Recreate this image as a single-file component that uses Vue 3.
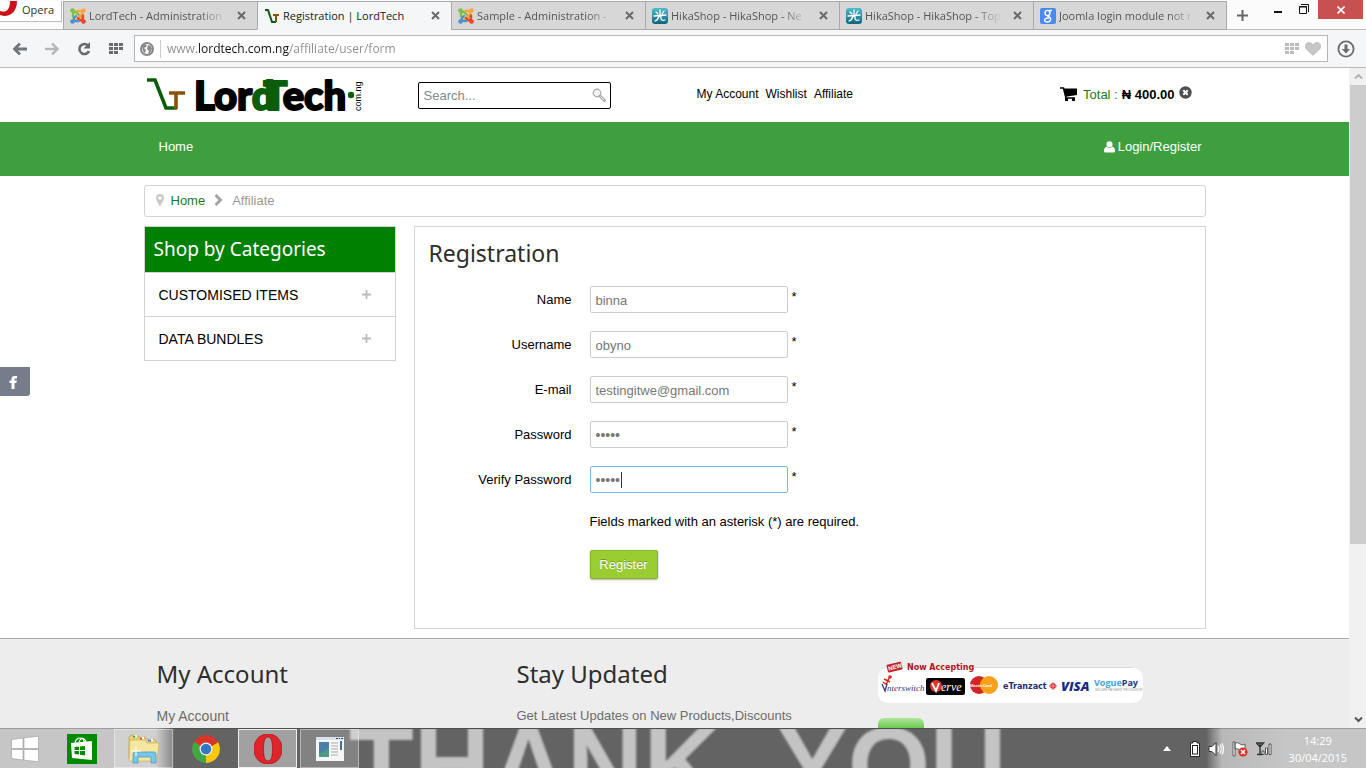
<template>
  <div class="screen">
    <header class="browser">
      <div class="tab-strip">
        <button class="opera-menu" type="button">
          <svg class="opera-mark" viewBox="0 0 18 16" width="18" height="16">
            <path d="M10 0 H17 C17 9 12 15 4 15 L0 14 V10 C6 12 10 9 10 0 Z" fill="#cc1118" />
          </svg>
          <span>Opera</span>
        </button>
        <div v-for="tab in tabs" :key="tab.id" class="tab" :class="{ active: tab.active }">
          <svg v-if="tab.icon === 'joomla'" viewBox="0 0 16 16" width="16" height="16">
            <g fill="none" stroke-width="2.4" stroke-linecap="round">
              <path d="M3 8.500 V6 Q3 3 6 4 L11.500 9.500" stroke="#7ac143" />
              <path d="M7.500 3 H10 Q13 3 12 6 L6.500 11.500" stroke="#f9a541" />
              <path d="M13 7.500 V10 Q13 13 10 12 L8 10" stroke="#f44321" />
              <path d="M8.500 13 H6 Q3 13 4 10 L6 8" stroke="#5091cd" />
            </g>
            <circle cx="2.500" cy="2.500" r="2.300" fill="#7ac143" />
            <circle cx="13.500" cy="2.500" r="2.300" fill="#f9a541" />
            <circle cx="13.500" cy="13.500" r="2.300" fill="#f44321" />
            <circle cx="2.500" cy="13.500" r="2.300" fill="#5091cd" />
          </svg>
          <svg v-else-if="tab.icon === 'lord'" viewBox="0 0 16 16" width="16" height="16">
            <path d="M1 2 H4 L8 14 H12" fill="none" stroke="#0b5d0b" stroke-width="2" />
            <path d="M9 7 H15 M12 7 V14" fill="none" stroke="#8a5208" stroke-width="2" />
          </svg>
          <svg v-else-if="tab.icon === 'hika'" viewBox="0 0 16 16" width="16" height="16">
            <defs>
              <linearGradient id="hika" x1="0" y1="0" x2="0" y2="1">
                <stop offset="0" stop-color="#4fb9cc" />
                <stop offset="1" stop-color="#11657c" />
              </linearGradient>
            </defs>
            <rect width="16" height="16" rx="3" fill="url(#hika)" />
            <path
              d="M8 2 V8 M4 4 L6 6 M12 3 L10 6 M2 8 L14 7 M7 8 Q6 12 3 13 M9 8 V11 Q10 13 13 12"
              fill="none"
              stroke="#fff"
              stroke-width="1.3"
              stroke-linecap="round"
            />
          </svg>
          <svg v-else viewBox="0 0 16 16" width="16" height="16">
            <rect width="16" height="16" rx="2" fill="#4a8af4" />
            <g fill="none" stroke="#fff" stroke-width="1.4">
              <ellipse cx="7.5" cy="5" rx="2.4" ry="2.6" />
              <path d="M9 2.5 H12 M7 8 Q11 9 10.6 11.5 Q10 14 7.5 14 Q4.6 14 4.6 12 Q5 10 9 10" />
            </g>
          </svg>
          <span class="tab-title">{{ tab.title }}</span>
          <button class="tab-close" type="button" aria-label="Close tab">
            <svg viewBox="0 0 9 9" width="9" height="9">
              <path d="M1 1 L8 8 M8 1 L1 8" stroke="#6a6a6a" stroke-width="2" />
            </svg>
          </button>
        </div>
        <button class="new-tab" type="button" aria-label="New tab">
          <svg viewBox="0 0 11 11" width="11" height="11">
            <path d="M5.5 0 V11 M0 5.5 H11" stroke="#666" stroke-width="2" />
          </svg>
        </button>
        <div class="window-controls">
          <button type="button" aria-label="Minimize">
            <svg viewBox="0 0 10 18" width="10" height="18">
              <path d="M1 12 H9" stroke="#111" stroke-width="2" />
            </svg>
          </button>
          <button type="button" aria-label="Restore">
            <svg viewBox="0 0 10 18" width="10" height="18">
              <path d="M2 4.5 H9.5 V12" fill="none" stroke="#111" />
              <path d="M.5 6.5 H7.5 V13.5 H.5 Z M0 7 H8" fill="none" stroke="#111" />
            </svg>
          </button>
          <button class="window-close" type="button" aria-label="Close">
            <svg viewBox="0 0 8 8" width="8" height="8">
              <path d="M.5 .5 L7.5 7.5 M7.5 .5 L.5 7.5" stroke="#fff" stroke-width="1.6" />
            </svg>
          </button>
        </div>
      </div>

      <div class="toolbar">
        <button type="button" aria-label="Back">
          <svg viewBox="0 0 14 12" width="14" height="12">
            <path d="M7 0.5 L1.5 6 L7 11.5 M2 6 H14" fill="none" stroke="#70767c" stroke-width="2.8" />
          </svg>
        </button>
        <button type="button" aria-label="Forward">
          <svg viewBox="0 0 14 12" width="14" height="12">
            <path d="M7 0.5 L12.5 6 L7 11.5 M12 6 H0" fill="none" stroke="#b6b6b6" stroke-width="2.4" />
          </svg>
        </button>
        <button type="button" aria-label="Reload">
          <svg viewBox="0 0 14 14" width="14" height="14">
            <path d="M11 3.5 A5 5 0 1 0 12 9" fill="none" stroke="#6a6a6a" stroke-width="2.6" />
            <path d="M13 0 V6.5 H6.5 Z" fill="#6a6a6a" />
          </svg>
        </button>
        <button type="button" aria-label="Speed dial">
          <svg viewBox="0 0 14 11" width="14" height="11">
            <path
              d="M0 1.5 H4 M5 1.5 H9 M10 1.5 H14 M0 5.5 H4 M5 5.5 H9 M10 5.5 H14 M0 9.5 H4 M5 9.5 H9"
              stroke="#6a6a6a"
              stroke-width="3"
            />
          </svg>
        </button>
        <div class="address">
          <svg viewBox="0 0 14 14" width="14" height="14">
            <circle cx="7" cy="7" r="6" fill="#fff" stroke="#888" stroke-width="2" />
            <path d="M2 4 L5 2 L7 3 L6 5 L4 6 L6 8 L5 11 L3 9 Z M8 3 L11 4 L12 7 L10 11 L8 12 L9 9 L7 7 Z" fill="#888" />
          </svg>
          <span class="address-line"></span>
          <input v-model="url" class="url" type="text" aria-label="Address" />
          <svg viewBox="0 0 14 11" width="14" height="11">
            <path
              d="M0 1.5 H4 M5 1.5 H9 M10 1.5 H14 M0 5.5 H4 M5 5.5 H9 M10 5.5 H14 M0 9.5 H4 M5 9.5 H9"
              stroke="#bbb"
              stroke-width="3"
            />
          </svg>
          <svg viewBox="0 0 16 14" width="16" height="14">
            <path
              d="M8 13.5 L1.2 7 C-.8 4.500 .4 .5 4 .5 C6 .5 7.400 1.600 8 3 C8.600 1.600 10 .5 12 .5 C15.600 .5 16.800 4.500 14.800 7 Z"
              fill="#c6c6c6"
              stroke="#b4b4b4"
              stroke-width=".6"
            />
          </svg>
        </div>
        <button type="button" aria-label="Downloads">
          <svg viewBox="0 0 18 18" width="18" height="18">
            <circle cx="9" cy="9" r="7.600" fill="none" stroke="#6b6b6b" stroke-width="1.8" />
            <path d="M7.500 4.500 H10.500 V9 H13 L9 13.500 L5 9 H7.500 Z" fill="#6b6b6b" />
          </svg>
        </button>
      </div>
    </header>

    <div class="viewport">
      <div class="page">
        <div class="site-header container">
          <a class="logo" href="#" aria-label="LordTech">
            <svg viewBox="0 0 218 40" width="218" height="40">
              <path d="M0 5 H8 L19 33 H30" fill="none" stroke="#0b5d0b" stroke-width="3.600" />
              <path d="M22 18 H38 M29 18 V34" fill="none" stroke="#8a5208" stroke-width="3.600" />
              <text x="47" y="35" class="logo-word">Lor<tspan class="green">d</tspan><tspan class="green" dx="-11">T</tspan>ech</text>
              <circle cx="204" cy="20" r="3.200" fill="#0b5d0b" />
              <text class="logo-domain" transform="translate(214 36) rotate(-90)">com.ng</text>
            </svg>
          </a>
          <form class="search" @submit.prevent>
            <input v-model="query" type="text" placeholder="Search..." aria-label="Search" />
            <button type="submit" aria-label="Go">
              <svg viewBox="0 0 14 14" width="14" height="14">
                <circle cx="5" cy="5" r="3.800" fill="#f4f4f4" stroke="#aaa" stroke-width="1.2" />
                <path d="M8 8 L12.500 12.500" stroke="#aaa" stroke-width="3" stroke-linecap="round" />
                <path d="M8.500 8.500 L12.300 12.300" stroke="#f4f4f4" stroke-width="1" />
              </svg>
            </button>
          </form>
          <nav class="top-links">
            <a v-for="link in topLinks" :key="link" href="#">{{ link }}</a>
          </nav>
          <div class="cart">
            <svg viewBox="0 0 17 15" width="17" height="15">
              <path d="M0 1 H3.500 L6 11 H15" fill="none" stroke="#000" stroke-width="1.600" />
              <path d="M3.500 1.500 H17 V8 L5.500 9.800 Z" fill="#000" />
              <rect x="5" y="11" width="3" height="3" fill="#000" />
              <rect x="12" y="11" width="3" height="3" fill="#000" />
            </svg>
            <span class="cart-label">Total :</span>
            <b>₦ 400.00</b>
            <button type="button" aria-label="Empty cart">
              <svg viewBox="0 0 13 13" width="13" height="13">
                <circle cx="6.500" cy="6.500" r="6.200" fill="#505050" />
                <path d="M4.300 4.300 L8.700 8.700 M8.700 4.300 L4.300 8.700" stroke="#fff" stroke-width="2" />
              </svg>
            </button>
          </div>
        </div>

        <nav class="main-nav">
          <div class="container nav-inner">
            <a href="#">Home</a>
            <a href="#" class="login">
              <svg viewBox="0 0 11 12" width="11" height="12">
                <circle cx="5.500" cy="3.200" r="3" fill="#fff" />
                <path d="M2.500 5.500 Q5.500 8 8.500 5.500 Q11 6.500 11 10 Q11 11.500 9.500 11.500 H1.500 Q0 11.500 0 10 Q0 6.500 2.500 5.500 Z" fill="#fff" />
              </svg>
              <span>Login/Register</span>
            </a>
          </div>
        </nav>

        <div class="container content">
          <div class="breadcrumb">
            <svg viewBox="0 0 8 13" width="8" height="13">
              <path
                fill-rule="evenodd"
                d="M4 0 A4 4 0 0 1 8 4 C8 6.500 5.500 9 4 13 C2.500 9 0 6.500 0 4 A4 4 0 0 1 4 0 Z M4 2.200 A1.800 1.800 0 1 0 4 5.800 A1.800 1.800 0 1 0 4 2.200 Z"
                fill="#c8c8c8"
              />
            </svg>
            <a href="#">Home</a>
            <svg class="chevron" viewBox="0 0 9 12" width="9" height="12">
              <path d="M1.500 1 L6.500 6 L1.500 11" fill="none" stroke="#a5a5a5" stroke-width="3" />
            </svg>
            <span>Affiliate</span>
          </div>

          <div class="columns">
            <aside class="categories">
              <h3>Shop by Categories</h3>
              <a v-for="item in categories" :key="item" href="#">
                <span>{{ item }}</span>
                <svg viewBox="0 0 9 9" width="9" height="9">
                  <path d="M4.500 0 V9 M0 4.500 H9" stroke="#bbb" stroke-width="1.800" />
                </svg>
              </a>
            </aside>

            <main class="registration">
              <h2>Registration</h2>
              <form @submit.prevent>
                <div v-for="field in fields" :key="field.id" class="field">
                  <label :for="field.id">{{ field.label }}</label>
                  <div class="field-box">
                    <input
                      :id="field.id"
                      v-model="field.value"
                      :type="field.type"
                      :class="{ focused: field.focused }"
                    />
                    <span v-if="field.focused" class="caret"></span>
                  </div>
                  <span class="star">*</span>
                </div>
                <p class="note">Fields marked with an asterisk (*) are required.</p>
                <button class="register" type="submit">Register</button>
              </form>
            </main>
          </div>
        </div>

        <footer class="site-footer">
          <div class="container footer-grid">
            <section>
              <h2>My Account</h2>
              <a class="footer-link" href="#">My Account</a>
            </section>
            <section>
              <h2>Stay Updated</h2>
              <p>Get Latest Updates on New Products,Discounts</p>
            </section>
            <section class="payments">
              <svg viewBox="0 0 266 46" width="266" height="46">
                <rect x="0" y="9" width="265" height="35" rx="10" fill="#fff" />
                <path d="M96 8.500 H255" stroke="#ddd" />
                <g transform="rotate(-14 17 8)">
                  <rect x="9" y="4" width="15" height="8" rx="1" fill="#c0222b" />
                  <text x="10" y="10" class="tag">NEW</text>
                </g>
                <text x="29" y="11" class="accepting">Now Accepting</text>
                <path d="M6 20 L12 23 M11 19 L8 26 M5 23 L9 26" stroke="#d22" stroke-width="1.400" />
                <circle cx="12" cy="18" r="1.800" fill="#d22" />
                <path d="M4 25 L7 32 L9 25" fill="none" stroke="#3a3a7a" stroke-width="1.300" />
                <text x="9" y="32" class="interswitch">nterswitch</text>
                <rect x="48" y="19" width="39" height="17" rx="2" fill="#050505" />
                <circle cx="58" cy="27" r="6" fill="#e3342a" />
                <path d="M54 24 L58 32 L61 24" fill="none" stroke="#fff" stroke-width="1.800" />
                <text x="63" y="32" class="verve">erve</text>
                <circle cx="101" cy="26" r="9" fill="#d2232a" />
                <circle cx="111" cy="26" r="9" fill="#f9a01b" />
                <text x="92" y="28" class="mastercard">MasterCard</text>
                <text x="125" y="30" class="etranzact">eTranzact</text>
                <path d="M175 23 L179 27 L175 31 L171 27 Z" fill="#e3242b" />
                <path d="M175 23 V31 M171 27 H179" stroke="#fff" stroke-width=".5" />
                <text x="183" y="32" class="visa">VISA</text>
                <text x="216" y="27" class="vogue">Vogue<tspan fill="#2b3191">Pay</tspan></text>
                <text x="217" y="32" class="vogue-note">SECURE PAYMENT PROCESSOR</text>
              </svg>
              <div class="green-badge">
                <svg viewBox="0 0 46 10" width="46" height="10">
                  <path d="M16 9.500 H18 M21 9.500 H27 M29 9.500 H31 M34 9.500 H42" stroke="#fff" />
                </svg>
              </div>
            </section>
          </div>
        </footer>

        <a class="facebook" href="#" aria-label="Facebook">
          <svg viewBox="0 0 8 14" width="8" height="14">
            <path d="M8 1 V3.500 H6.500 Q5.500 3.500 5.500 4.500 V5.500 H7.800 L7.400 8 H5.500 V14 H2.500 V8 H.5 V5.500 H2.500 V4 Q2.500 1 5.500 1 Z" fill="#fff" />
          </svg>
        </a>
      </div>

      <div class="scrollbar">
        <svg viewBox="0 0 9 6" width="9" height="17">
          <path d="M1 5 L4.500 1.500 L8 5" fill="none" stroke="#b0b0b0" stroke-width="1.800" />
        </svg>
        <div class="thumb"></div>
        <svg viewBox="0 0 9 6" width="9" height="17">
          <path d="M1 1 L4.500 4.500 L8 1" fill="none" stroke="#555" stroke-width="2" />
        </svg>
      </div>
    </div>

    <footer class="taskbar">
      <div class="wallpaper" aria-hidden="true"><span>THANK</span><span>YOU</span></div>
      <button class="start" type="button" aria-label="Start">
        <svg viewBox="0 0 28 26" width="28" height="26">
          <path
            d="M.5 3.500 L12 2 V12.500 H.5 Z M13 1.800 L27.500 .3 V12.500 H13 Z M.5 13.500 H12 V24 L.5 22.500 Z M13 13.500 H27.500 V25.700 L13 24.200 Z"
            fill="#fff"
            stroke="#999"
            stroke-width=".6"
          />
        </svg>
      </button>
      <button class="task" type="button" aria-label="Store">
        <svg viewBox="0 0 30 30" width="30" height="30">
          <rect width="30" height="30" fill="#008a00" />
          <path d="M4 9 L25 7 V26 L5 24 Z" fill="#fff" />
          <path d="M8 9 Q9 4 13 4 Q17 4 17 8 M12 8 Q14 3 17 5 Q19 6 19 8" fill="none" stroke="#fff" stroke-width="1.200" />
          <path d="M7.500 13 L12 12.500 V16 H7.500 Z M13 12.400 L18 12 V16 H13 Z M7.500 17 H12 V20.500 L7.500 20 Z M13 17 H18 V21.500 L13 20.800 Z" fill="#008a00" />
        </svg>
      </button>
      <button class="task open" type="button" aria-label="File Explorer">
        <svg viewBox="0 0 32 30" width="32" height="30">
          <path d="M1 3 L3 1 H9 L10 3 H17 L18 5 H26 L28 7 V25 H1 Z" fill="#e9cf73" stroke="#b99a3c" stroke-width=".7" />
          <path d="M5 2 H9 M12 4 H16 M20 6 H25" stroke="#fff" stroke-width="2.500" />
          <path d="M5 2.500 H7" stroke="#1fb33b" stroke-width="2" />
          <path d="M12 4.500 H14" stroke="#d3402b" stroke-width="2" />
          <path d="M20 6.500 H23" stroke="#2d8fd8" stroke-width="2" />
          <path d="M2 6 H17 L19 9 H31 L29 27 H1 Z" fill="#f6e6a0" stroke="#cfb357" stroke-width=".7" />
          <path d="M5 20 Q5 18 7 18 H26 Q28 18 28 20 V29 H23 V23 H10 V29 H5 Z" fill="#7cc5ea" stroke="#4a9cc7" stroke-width=".8" />
          <path d="M8 12 V22 M3 17 H13" stroke="#fff" stroke-width="1" />
        </svg>
      </button>
      <button class="task" type="button" aria-label="Chrome">
        <svg viewBox="0 0 28 28" width="28" height="28">
          <path d="M14 14 L1.900 7 A14 14 0 0 1 26.100 7 Z" fill="#d9362b" />
          <path d="M14 14 L26.100 7 A14 14 0 0 1 14 28 Z" fill="#fbc70f" />
          <path d="M14 14 L14 28 A14 14 0 0 1 1.900 7 Z" fill="#46a545" />
          <path d="M14 7.500 H26.300 L14 14 Z" fill="#d9362b" />
          <path d="M8.400 17.200 L1.900 7 L14 14 Z" fill="#46a545" />
          <path d="M19.600 17.200 L14 28 V14 Z" fill="#fbc70f" />
          <circle cx="14" cy="14" r="6.500" fill="#f2f2f2" />
          <circle cx="14" cy="14" r="5.200" fill="#3078c2" />
        </svg>
      </button>
      <button class="task open current" type="button" aria-label="Opera">
        <svg viewBox="0 0 28 30" width="28" height="30">
          <path
            fill-rule="evenodd"
            d="M14 0 C22 0 28 6 28 15 C28 24 22 30 14 30 C6 30 0 24 0 15 C0 6 6 0 14 0 Z M14 3 C10.500 3 9.500 8 9.500 15 C9.500 22 10.500 27 14 27 C17.500 27 18.500 22 18.500 15 C18.500 8 17.500 3 14 3 Z"
            fill="#e0242c"
            stroke="#b0141b"
            stroke-width=".8"
          />
        </svg>
      </button>
      <button class="task open" type="button" aria-label="Settings window">
        <svg viewBox="0 0 28 24" width="28" height="24">
          <rect width="28" height="24" fill="#f6f6f6" />
          <rect width="28" height="3" fill="#d7e2ee" />
          <path d="M20 1.500 H22 M23 1.500 H24 M25 1.500 H27" stroke="#345" stroke-width="1.200" />
          <rect x="3" y="5" width="10" height="15" fill="#4c9a8a" />
          <path d="M3 5 H13 V11 L3 17 Z" fill="#4b7fa8" />
          <path d="M15 6 H22 M15 9 H22 M15 12 H22 M15 15 H22 M15 18 H22" stroke="#aaa" stroke-width="1" />
          <rect x="24" y="4" width="2" height="9" fill="#3d74a6" />
        </svg>
      </button>
      <div class="tray">
        <svg viewBox="0 0 8 5" width="8" height="5"><path d="M4 0 L8 5 H0 Z" fill="#fff" /></svg>
        <svg viewBox="0 0 10 16" width="10" height="16">
          <path d="M3 .5 H7 V2 H9.500 V15.500 H.5 V2 H3 Z" fill="#fff" stroke="#222" />
          <rect x="2.500" y="4.500" width="5" height="8.500" fill="#fff" stroke="#222" />
        </svg>
        <svg viewBox="0 0 16 16" width="16" height="16">
          <path d="M1 5.500 H4 L8 1.500 V14.500 L4 10.500 H1 Z" fill="#fff" stroke="#333" />
          <path d="M10 5 Q11.500 8 10 11 M12 3.500 Q14.500 8 12 12.500 M14 2.500 Q17 8 14 13.500" fill="none" stroke="#fff" stroke-width="1.200" />
        </svg>
        <svg viewBox="0 0 16 16" width="16" height="16">
          <path d="M1 1 H3 V15 H1 Z M3 2 Q6 1 8 3 Q11 5 13 3 V9 Q10 11 8 9 Q6 7 3 8 Z" fill="#fff" stroke="#444" stroke-width=".8" />
          <circle cx="11" cy="11" r="4.600" fill="#d9332b" />
          <path d="M9 9 L13 13 M13 9 L9 13" stroke="#fff" stroke-width="1.600" />
        </svg>
        <svg viewBox="0 0 16 16" width="16" height="16">
          <path d="M.5 2 H7.500 L4 6 Z M4 2 V13 M1 13.500 H6" fill="none" stroke="#333" stroke-width="1.400" />
          <path d="M6 13.500 V10 H8 V13.500 Z M9.500 13.500 V7 H11.500 V13.500 Z M13 13.500 V3 H15 V13.500 Z" fill="#fff" stroke="#333" stroke-width=".8" />
        </svg>
        <div class="clock"><span>14:29</span><span>30/04/2015</span></div>
      </div>
    </footer>
  </div>
</template>

<script setup>
import { reactive, ref } from 'vue'

const url = ref('www.lordtech.com.ng/affiliate/user/form')
const query = ref('')

const tabs = [
  { id: 1, icon: 'joomla', title: 'LordTech - Administration' },
  { id: 2, icon: 'lord', title: 'Registration | LordTech', active: true },
  { id: 3, icon: 'joomla', title: 'Sample - Administration -' },
  { id: 4, icon: 'hika', title: 'HikaShop - HikaShop - Ne' },
  { id: 5, icon: 'hika', title: 'HikaShop - HikaShop - Top' },
  { id: 6, icon: 'google', title: 'Joomla login module not r' }
]

const topLinks = ['My Account', 'Wishlist', 'Affiliate']
const categories = ['CUSTOMISED ITEMS', 'DATA BUNDLES']

const fields = reactive([
  { id: 'name', label: 'Name', type: 'text', value: 'binna' },
  { id: 'username', label: 'Username', type: 'text', value: 'obyno' },
  { id: 'email', label: 'E-mail', type: 'text', value: 'testingitwe@gmail.com' },
  { id: 'password', label: 'Password', type: 'password', value: '12345' },
  { id: 'password2', label: 'Verify Password', type: 'password', value: '12345', focused: true }
])
</script>

<style>
body {
  margin: 0;
}
</style>

<style scoped>
* {
  box-sizing: border-box;
}

.screen {
  display: flex;
  flex-direction: column;
  height: 100vh;
  overflow: hidden;
  font-family: 'Liberation Sans', Arial, sans-serif;
  font-size: 13px;
  color: #000;
}

button {
  display: flex;
  align-items: center;
  justify-content: center;
  padding: 0;
  border: 0;
  background: none;
  font-family: inherit;
}

a {
  color: inherit;
  text-decoration: none;
}

svg {
  flex-shrink: 0;
}

h2,
h3,
p {
  margin: 0;
}

/* browser chrome */
.browser {
  flex-shrink: 0;
  font-family: 'Open Sans', 'Noto Sans', sans-serif;
}

.tab-strip {
  display: flex;
  height: 30px;
  padding-top: 1px;
  background: #fbfbfb;
  border-bottom: 1px solid #bcbcbc;
}

.opera-menu {
  width: 62px;
  height: 21px;
  margin-right: 1px;
  padding-bottom: 3px;
  gap: 4px;
  justify-content: flex-start;
  border: 1px solid #bdbdbd;
  border-width: 0 1px 1px 0;
  background: #fff;
  font-size: 11px;
  color: #333;
}

.opera-mark {
  align-self: flex-start;
}

.tab {
  display: flex;
  align-items: center;
  flex: 0 1 194px;
  min-width: 0;
  height: 29px;
  padding: 0 11px 0 6px;
  gap: 3px;
  border: 1px solid #a9a9a9;
  border-width: 1px 0 1px 1px;
  background: #d7d7d7;
}

.tab.active {
  background: #f5f6f8;
  border-bottom-color: #f5f6f8;
}

.tab:nth-last-child(3) {
  border-right-width: 1px;
}

.tab-title {
  flex: 1;
  overflow: hidden;
  white-space: nowrap;
  font-size: 11px;
  color: #555;
  mask-image: linear-gradient(90deg, #000 80%, transparent);
}

.active .tab-title {
  color: #222;
  mask-image: none;
}

.tab-close {
  width: 9px;
  margin-left: 8px;
}

.new-tab {
  width: 30px;
}

.window-controls {
  display: flex;
  align-items: flex-start;
  gap: 16px;
  height: 18px;
  margin: -1px 3px 0 auto;
}

.window-controls button:nth-child(2) {
  margin-right: -7px;
}

.window-close {
  width: 45px;
  height: 19px;
  background: #c75050;
}

.toolbar {
  display: flex;
  align-items: center;
  height: 38px;
  padding: 0 11px 0 13px;
  gap: 18px;
  background: #f5f6f8;
  border-bottom: 1px solid #b9b9b9;
}

.address {
  display: flex;
  align-items: center;
  flex: 1;
  height: 27px;
  margin: 0 -9px 0 -7px;
  padding: 0 6px 0 5px;
  gap: 6px;
  background: #fff;
  border: 1px solid #b5b5b5;
}

.address-line {
  width: 1px;
  height: 18px;
  background: #ccc;
}

.url {
  flex: 1;
  padding: 0;
  border: 0;
  outline: 0;
  font-family: inherit;
  font-size: 12px;
  color: transparent;
  /* the host is drawn darker than the rest of the address */
  background: linear-gradient(90deg, #8c8c8c 30px, #111 30px, #111 122px, #8c8c8c 122px);
  background-clip: text;
}

/* page */
.viewport {
  display: flex;
  flex: 1;
  min-height: 0;
}

.page {
  position: relative;
  display: flex;
  flex-direction: column;
  flex: 1;
  min-width: 0;
  overflow: hidden;
  background: #fff;
}

.container {
  width: 100%;
  max-width: 1062px;
  margin: 0 auto;
}

.site-header {
  display: flex;
  align-items: center;
  flex-shrink: 0;
  height: 54px;
}

.logo {
  display: flex;
  flex: 0 0 271px;
  padding-left: 3px;
}

.logo-word {
  font-family: Lato, 'Liberation Sans', sans-serif;
  font-size: 40px;
  font-weight: 900;
  stroke: #000;
  stroke-width: 2;
  stroke-linejoin: round;
}

.logo-word .green {
  fill: #0b5d0b;
  stroke: #0b5d0b;
}

.logo-domain {
  font-size: 9px;
}

.search {
  display: flex;
  align-items: center;
  flex: 0 0 193px;
  min-width: 0;
  height: 27px;
  margin: 0 86px 0 3px;
  padding: 0 4px 0 5px;
  border: 1px solid #000;
  border-radius: 2px;
}

.search input {
  flex: 1;
  min-width: 0;
  padding: 0;
  border: 0;
  outline: 0;
  font-family: inherit;
  font-size: 13px;
}

.search input::placeholder {
  color: #808890;
}

.top-links {
  display: flex;
  gap: 7px;
  padding-bottom: 3px;
  font-size: 12px;
}

.cart {
  display: flex;
  align-items: center;
  gap: 4px;
  margin: 0 14px 0 auto;
  padding-bottom: 2px;
}

.cart-label {
  margin-left: 2px;
  color: #1a7a1a;
}

.cart button {
  padding-bottom: 4px;
}

.main-nav {
  flex-shrink: 0;
  background: #3f9f3f;
  color: #fff;
}

.nav-inner {
  display: flex;
  align-items: center;
  justify-content: space-between;
  height: 54px;
  padding: 0 4px 5px 15px;
}

.login {
  display: flex;
  align-items: center;
  gap: 3px;
}

.content {
  flex-shrink: 0;
  padding: 9px 0;
}

.breadcrumb {
  display: flex;
  align-items: center;
  height: 32px;
  padding: 0 11px 2px;
  border: 1px solid #d3d3d3;
  border-radius: 3px;
  color: #999;
}

.breadcrumb a {
  margin: 0 9px 0 7px;
  color: #1a7a1a;
}

.chevron {
  margin-right: 9px;
}

.columns {
  display: flex;
  align-items: flex-start;
  gap: 18px;
  margin-top: 9px;
}

.categories {
  flex: 0 0 252px;
  border: 1px solid #d3d3d3;
}

.categories h3 {
  height: 45px;
  padding-left: 9px;
  background: #008000;
  color: #fff;
  font: 400 19px/44px 'Noto Sans', 'Open Sans', sans-serif;
}

.categories a {
  display: flex;
  align-items: center;
  justify-content: space-between;
  height: 44px;
  padding: 0 24px 0 14px;
  border-top: 1px solid #d3d3d3;
  font-size: 14px;
}

.registration {
  flex: 1;
  min-width: 0;
  padding: 11px 14px 49px;
  border: 1px solid #d3d3d3;
}

.registration h2,
.site-footer h2 {
  font: 400 24px/30px 'Noto Sans', 'Open Sans', sans-serif;
  color: #2d2d2d;
}

.registration h2 {
  font-size: 23px;
}

.registration form {
  padding-top: 18px;
}

.field {
  display: flex;
  margin-bottom: 18px;
}

.field label {
  width: 143px;
  margin-right: 18px;
  line-height: 28px;
  height: 27px;
  text-align: right;
}

.field-box {
  position: relative;
}

.field input {
  display: block;
  width: 198px;
  height: 27px;
  padding: 1px 5px 0;
  border: 1px solid #ccc;
  border-radius: 2px;
  outline: 0;
  background: #fff;
  font-family: inherit;
  font-size: 13px;
  color: #777;
}

.field input[type='password'] {
  font-size: 14px;
}

.field input.focused {
  border-color: #7ab7ea;
}

.caret {
  position: absolute;
  top: 6px;
  left: 31px;
  width: 1px;
  height: 16px;
  background: #333;
}

.star {
  margin-left: 4px;
  line-height: 22px;
}

.note {
  padding: 2px 0 19px 161px;
  line-height: 18px;
}

.register {
  width: 68px;
  height: 29px;
  margin-left: 161px;
  border: 1px solid #86b32c;
  border-radius: 2px;
  background: #9acd32;
  box-shadow: 0 1px 2px rgba(0, 0, 0, 0.3);
  color: #fff;
  font-size: 13px;
  text-shadow: 0 -1px 0 rgba(0, 0, 0, 0.25);
}

.site-footer {
  flex: 1 0 auto;
  border-top: 1px solid #acacac;
  background: #ededed;
  color: #6c6c6c;
}

.footer-grid {
  display: grid;
  grid-template-columns: 360px 361px 1fr;
  padding: 20px 0 0 13px;
}

.footer-grid h2 {
  margin-bottom: 19px;
}

.footer-link {
  font-size: 14px;
}

.payments {
  display: flex;
  flex-direction: column;
  gap: 13px;
}

.tag {
  fill: #fff;
  font-size: 6px;
  font-weight: 700;
}

.accepting {
  fill: #b3131b;
  font: 700 8px 'DejaVu Sans', sans-serif;
}

.interswitch {
  fill: #3a3a7a;
  font: italic 9px 'Liberation Serif', serif;
}

.verve {
  fill: #fff;
  font: italic 12px 'Liberation Serif', serif;
}

.mastercard {
  fill: #fff;
  font-size: 4px;
  font-weight: 700;
}

.etranzact {
  fill: #2a2a72;
  font: 700 8px 'DejaVu Sans', sans-serif;
}

.visa {
  fill: #1a2a8c;
  font: italic 800 13px 'Open Sans', sans-serif;
}

.vogue {
  fill: #45a5dc;
  font: 700 9px 'Open Sans', sans-serif;
}

.vogue-note {
  fill: #999;
  font-size: 3px;
}

.green-badge {
  width: 46px;
  height: 10px;
  border-radius: 6px 6px 0 0;
  background: linear-gradient(#b0e69b, #6cc850);
}

.facebook {
  position: absolute;
  top: 299px;
  left: 0;
  display: flex;
  align-items: center;
  justify-content: center;
  width: 30px;
  height: 29px;
  padding-right: 4px;
  border-radius: 0 0 3px 0;
  background: #767d8a;
}

.scrollbar {
  display: flex;
  flex-direction: column;
  align-items: center;
  width: 17px;
  padding-left: 1px;
  background: #f0f0f0;
}

.thumb {
  width: 100%;
  flex: 0 1 459px;
  margin-bottom: auto;
  background: #cdcdcd;
}

/* taskbar */
.taskbar {
  position: relative;
  display: flex;
  align-items: center;
  flex-shrink: 0;
  height: 40px;
  gap: 3px;
  overflow: hidden;
  border-top: 1px solid rgba(0, 0, 0, 0.2);
  background: linear-gradient(90deg, #c6c6c6 155px, #636363 175px, #636363 calc(100% - 160px), #b8b8b8 calc(100% - 144px), #c6c6c6 calc(100% - 80px));
}

.wallpaper {
  position: absolute;
  top: -28px;
  left: 349px;
  display: flex;
  gap: 57px;
  font-size: 106px;
  font-weight: 700;
  line-height: 126px;
  color: #c4c4c4;
  filter: blur(1px);
}

.start {
  width: 49px;
}

.task {
  position: relative;
  width: 59px;
  height: 39px;
  border: 1px solid transparent;
}

.open {
  border-color: rgba(255, 255, 255, 0.4);
  background: rgba(255, 255, 255, 0.2);
}

.current {
  border-color: #eee;
  background: rgba(255, 255, 255, 0.4);
}

.tray {
  position: relative;
  display: flex;
  align-items: center;
  gap: 8px;
  margin: 0 19px 0 auto;
}

.tray svg:first-child {
  margin-right: 11px;
}

.clock {
  display: flex;
  flex-direction: column;
  align-items: center;
  margin-left: 9px;
  font: 11px/17px 'Open Sans', sans-serif;
  color: #fff;
}
</style>
